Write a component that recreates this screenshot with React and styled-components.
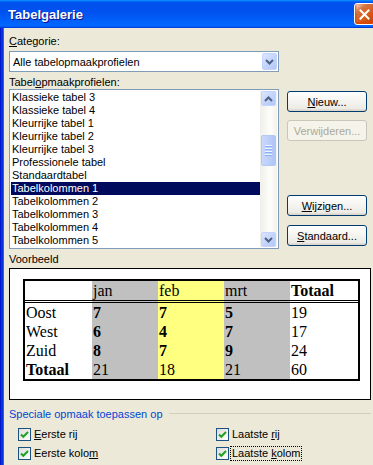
import React from 'react';
import styled, { createGlobalStyle } from 'styled-components';

const GlobalStyle = createGlobalStyle`
  html, body { margin: 0; padding: 0; overflow: hidden; background: #ECE9D8; }
  body { font-family: "Liberation Sans", Arial, sans-serif; font-size: 11px; color: #000; }
  * { box-sizing: border-box; }
`;

const Window = styled.div`
  width: 380px;
  min-height: 480px;
  background: #ECE9D8;
  box-shadow: inset 1px 0 #0019CF, inset 3px 0 #0831D9, inset 4px 0 #166AEE;
  display: flex;
  flex-direction: column;
`;

const TitleBar = styled.div`
  height: 28px;
  display: flex;
  align-items: center;
  justify-content: space-between;
  padding: 0 5px 0 8px;
  background: linear-gradient(180deg, #0997ff, #0053ee 8%, #0050ee 40%, #0066ff 88%, #0066ff 93%, #005bff 95%, #003dd7 96%, #003dd7);
`;

const Title = styled.span`
  color: #fff;
  font-weight: 700;
  font-size: 13px;
  text-shadow: 1px 1px #0f1089;
`;

const CloseButton = styled.div`
  width: 21px;
  height: 22px;
  border: 1px solid #fff;
  border-radius: 3px;
  background: radial-gradient(circle at 90% 90%, #cc4600 0, #dc6527 55%, #cd7546 70%, #ffccb2 90%, #fff 100%);
  box-shadow: inset 0 -1px 2px 1px #da4600;
  display: flex;
  align-items: center;
  justify-content: center;
`;

const Body = styled.div`
  padding: 7px 9px 0 9px;
  display: flex;
  flex-direction: column;
`;

const FieldLabel = styled.div`
  height: 13px;
  line-height: 13px;
  margin-top: ${p => p.$mt || 0}px;
  margin-bottom: ${p => p.$mb || 0}px;
  white-space: nowrap;
`;

const ComboBox = styled.div`
  width: 270px;
  height: 21px;
  border: 1px solid #7F9DB9;
  background: #fff;
  display: flex;
  align-items: center;
  justify-content: space-between;
  padding: 0 1px 0 3px;
`;

const ArrowBox = styled.div`
  width: ${p => p.$w || 15}px;
  height: ${p => p.$h || 17}px;
  border: 1px solid #C3D3FD;
  border-radius: 2px;
  background: linear-gradient(135deg, #DDE7FE 0%, #C4D5FC 50%, #B4C8F6 100%);
  display: flex;
  align-items: center;
  justify-content: center;
  flex-shrink: 0;
`;

const ListArea = styled.div`
  display: grid;
  grid-template-columns: 270px 80px;
  column-gap: 8px;
  height: 160px;
`;

const ListBox = styled.div`
  border: 1px solid #7F9DB9;
  background: #fff;
  padding: 1px;
  display: flex;
  height: 160px;
`;

const Items = styled.div`
  flex: 1;
  overflow: hidden;
`;

const Item = styled.div`
  height: 13px;
  line-height: 13px;
  padding-left: 1px;
  white-space: nowrap;
  background: ${p => (p.$selected ? '#000A5C' : 'transparent')};
  color: ${p => (p.$selected ? '#fff' : '#000')};
`;

const ScrollBar = styled.div`
  width: 17px;
  display: flex;
  flex-direction: column;
  background: linear-gradient(90deg, #F0EFE9, #FDFDFA 60%, #F3F1EB);
`;

const ScrollButton = styled(ArrowBox)`
  margin: 0 1px;
`;

const Track = styled.div`
  flex: 1;
  padding-top: 29px;
`;

const Thumb = styled.div`
  width: 15px;
  height: 31px;
  margin-left: 1px;
  border: 1px solid #B3C7F5;
  border-radius: 2px;
  background: linear-gradient(90deg, #C8D8FD, #BACDFA 60%, #AFC4F6);
  display: flex;
  flex-direction: column;
  align-items: center;
  justify-content: center;
  gap: 1px;
`;

const Grip = styled.div`
  width: 7px;
  height: 1px;
  background: #EEF4FE;
  box-shadow: 0 1px #8CB0F8;
  margin-bottom: 1px;
`;

const ButtonColumn = styled.div`
  display: flex;
  flex-direction: column;
  padding: 2px 0 3px 0;
`;

const Spacer = styled.div`
  flex: 1;
`;

const Button = styled.div`
  width: 80px;
  height: 21px;
  margin-bottom: ${p => p.$mb || 0}px;
  border: 1px solid ${p => (p.$disabled ? '#C9C7BA' : '#003C74')};
  border-radius: 3px;
  background: ${p => (p.$disabled ? '#F5F4EA' : 'linear-gradient(180deg, #fff, #ecebe5 86%, #d8d0c4)')};
  color: ${p => (p.$disabled ? '#ACA899' : '#000')};
  display: flex;
  align-items: center;
  justify-content: center;
  white-space: nowrap;
`;

const Preview = styled.div`
  width: 362px;
  height: 132px;
  border: 1px solid #000;
  background: #fff;
  padding: 10px 0 0 13px;
`;

const PreviewTable = styled.table`
  width: 337px;
  table-layout: fixed;
  border-collapse: separate;
  border-spacing: 0;
  border: 2px solid #000;
  font-family: "Liberation Serif", "Times New Roman", serif;
  font-size: 16px;
`;

const Col = styled.col`
  width: ${p => p.$w}px;
`;

const cellBg = {
  white: '#FFFFFF',
  gray: '#C0C0C0',
  dots: '#FFFF80',
};

const Cell = styled.td`
  line-height: 19px;
  padding: 0 1px;
  text-align: left;
  white-space: nowrap;
  overflow: hidden;
  background: ${p => cellBg[p.$bg || 'white']};
  font-weight: ${p => (p.$bold ? 700 : 400)};
  border-bottom: ${p => (p.$head ? '3px double #000' : '0')};
`;

const GroupHeader = styled.div`
  display: flex;
  align-items: center;
  gap: 6px;
  margin-top: 8px;
  height: 13px;
  line-height: 13px;
`;

const GroupTitle = styled.span`
  color: #0046D5;
  white-space: nowrap;
`;

const GroupLine = styled.div`
  flex: 1;
  height: 1px;
  background: #D0D0BF;
  margin-top: -3px;
`;

const CheckGrid = styled.div`
  display: grid;
  grid-template-columns: 198px 1fr;
  row-gap: 6px;
  margin-top: 7px;
  padding-left: 9px;
`;

const CheckRow = styled.div`
  display: flex;
  align-items: center;
  gap: 1px;
  height: 13px;
`;

const CheckBox = styled.div`
  width: 13px;
  height: 13px;
  border: 1px solid #1C5180;
  background: linear-gradient(135deg, #DCDCD7, #fff);
  display: flex;
  align-items: center;
  justify-content: center;
  flex-shrink: 0;
`;

const CheckText = styled.span`
  border: 1px dotted ${p => (p.$focused ? '#000' : 'transparent')};
  padding: 0 1px;
  height: 15px;
  line-height: 13px;
  white-space: nowrap;
`;

const ChevronDown = () => (
  <svg width="9" height="6" viewBox="0 0 9 6">
    <polyline points="1,1 4.5,4.5 8,1" fill="none" stroke="#4D6185" strokeWidth="2" />
  </svg>
);

const ChevronUp = () => (
  <svg width="9" height="6" viewBox="0 0 9 6">
    <polyline points="1,5 4.5,1.5 8,5" fill="none" stroke="#4D6185" strokeWidth="2" />
  </svg>
);

const CloseIcon = () => (
  <svg width="11" height="11" viewBox="0 0 11 11">
    <path d="M1.5 1.5 L9.5 9.5 M9.5 1.5 L1.5 9.5" stroke="#fff" strokeWidth="2" strokeLinecap="square" />
  </svg>
);

const Check = () => (
  <svg width="9" height="9" viewBox="0 0 9 9">
    <polyline points="1,4.5 3.3,6.8 8,2" fill="none" stroke="#21A121" strokeWidth="2" />
  </svg>
);

const styles = [
  'Klassieke tabel 3',
  'Klassieke tabel 4',
  'Kleurrijke tabel 1',
  'Kleurrijke tabel 2',
  'Kleurrijke tabel 3',
  'Professionele tabel',
  'Standaardtabel',
  'Tabelkolommen 1',
  'Tabelkolommen 2',
  'Tabelkolommen 3',
  'Tabelkolommen 4',
  'Tabelkolommen 5',
];

const header = ['', 'jan', 'feb', 'mrt', 'Totaal'];
const rows = [
  ['Oost', '7', '7', '5', '19'],
  ['West', '6', '4', '7', '17'],
  ['Zuid', '8', '7', '9', '24'],
  ['Totaal', '21', '18', '21', '60'],
];
const colBg = ['white', 'gray', 'dots', 'gray', 'white'];
const widths = [67, 66, 66, 66, 68];

export default function App() {
  return (
    <>
      <GlobalStyle />
      <Window>
        <TitleBar>
          <Title>Tabelgalerie</Title>
          <CloseButton>
            <CloseIcon />
          </CloseButton>
        </TitleBar>
        <Body>
          <FieldLabel $mb={3}>
            <u>C</u>ategorie:
          </FieldLabel>
          <ComboBox>
            <span>Alle tabelopmaakprofielen</span>
            <ArrowBox>
              <ChevronDown />
            </ArrowBox>
          </ComboBox>
          <FieldLabel $mt={4}>
            Tabel<u>o</u>pmaakprofielen:
          </FieldLabel>
          <ListArea>
            <ListBox>
              <Items>
                {styles.map((s, i) => (
                  <Item key={s} $selected={i === 7}>
                    {s}
                  </Item>
                ))}
              </Items>
              <ScrollBar>
                <ScrollButton $h={15}>
                  <ChevronUp />
                </ScrollButton>
                <Track>
                  <Thumb>
                    <Grip />
                    <Grip />
                    <Grip />
                    <Grip />
                  </Thumb>
                </Track>
                <ScrollButton $h={15}>
                  <ChevronDown />
                </ScrollButton>
              </ScrollBar>
            </ListBox>
            <ButtonColumn>
              <Button $mb={8}>
                <u>N</u>ieuw...
              </Button>
              <Button $disabled>Verwijderen...</Button>
              <Spacer />
              <Button $mb={9}>
                <u>W</u>ijzigen...
              </Button>
              <Button>
                <u>S</u>tandaard...
              </Button>
            </ButtonColumn>
          </ListArea>
          <FieldLabel $mt={4} $mb={2}>
            Voorbeeld
          </FieldLabel>
          <Preview>
            <PreviewTable>
              <colgroup>
                {widths.map((w, i) => (
                  <Col key={i} $w={w} />
                ))}
              </colgroup>
              <thead>
                <tr>
                  {header.map((h, i) => (
                    <Cell as="th" key={i} $head $bg={colBg[i]} $bold={i === 4}>
                      {h}
                    </Cell>
                  ))}
                </tr>
              </thead>
              <tbody>
                {rows.map((r, ri) => (
                  <tr key={ri}>
                    {r.map((c, ci) => (
                      <Cell
                        key={ci}
                        $bg={colBg[ci]}
                        $bold={ri === 3 ? ci === 0 : ci >= 1 && ci <= 3}
                      >
                        {c}
                      </Cell>
                    ))}
                  </tr>
                ))}
              </tbody>
            </PreviewTable>
          </Preview>
          <GroupHeader>
            <GroupTitle>Speciale opmaak toepassen op</GroupTitle>
            <GroupLine />
          </GroupHeader>
          <CheckGrid>
            <CheckRow>
              <CheckBox><Check /></CheckBox>
              <CheckText><u>E</u>erste rij</CheckText>
            </CheckRow>
            <CheckRow>
              <CheckBox><Check /></CheckBox>
              <CheckText>Laatste <u>r</u>ij</CheckText>
            </CheckRow>
            <CheckRow>
              <CheckBox><Check /></CheckBox>
              <CheckText>Eerste kolo<u>m</u></CheckText>
            </CheckRow>
            <CheckRow>
              <CheckBox><Check /></CheckBox>
              <CheckText $focused>Laatste <u>k</u>olom</CheckText>
            </CheckRow>
          </CheckGrid>
        </Body>
      </Window>
    </>
  );
}
